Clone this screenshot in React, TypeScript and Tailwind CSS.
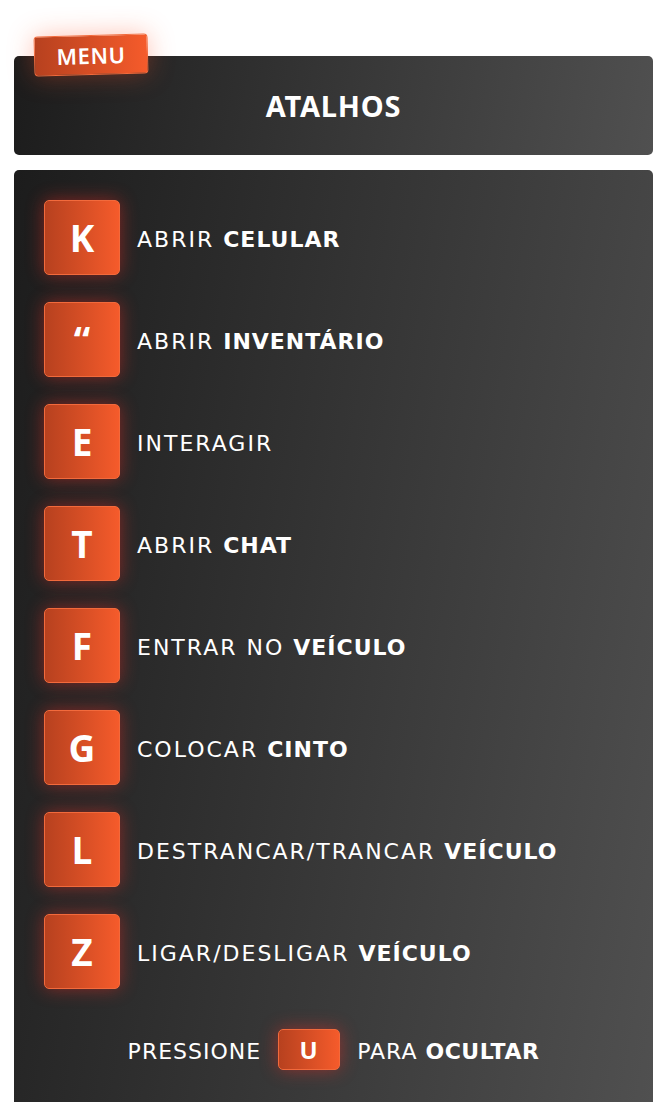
import { Fragment } from "react";

// atalhos do menu
const shortcuts = [
  { key: "K", text: "ABRIR", bold: "CELULAR" },
  { key: "\u201C", text: "ABRIR", bold: "INVENTÁRIO" },
  { key: "E", text: "INTERAGIR", bold: "" },
  { key: "T", text: "ABRIR", bold: "CHAT" },
  { key: "F", text: "ENTRAR NO", bold: "VEÍCULO" },
  { key: "G", text: "COLOCAR", bold: "CINTO" },
  { key: "L", text: "DESTRANCAR/TRANCAR", bold: "VEÍCULO" },
  { key: "Z", text: "LIGAR/DESLIGAR", bold: "VEÍCULO" },
];

const body = { fontFamily: '"DejaVu Sans", "Open Sans", sans-serif' };
const head = { fontFamily: '"Noto Sans", "Open Sans", sans-serif' };

function Key({ k, small }: { k: string; small?: boolean }) {
  return (
    <div
      className={
        "flex items-center justify-center rounded-[5px] border border-[#f26a3c] bg-[linear-gradient(90deg,#b7411f,#f55b2b)] text-white font-bold shadow-[0_0_18px_rgba(255,45,35,0.45)] " +
        (small ? "w-[62px] h-[41px] text-[24px]" : "w-[76px] h-[75px] text-[37px]")
      }
      style={{ fontFamily: '"Open Sans", sans-serif' }}
    >
      {k}
    </div>
  );
}

export default function App() {
  return (
    <div className="min-h-[1102px] bg-white pt-[56px] pl-[14px] pr-[1px]" style={body}>
      {/* HEADER */}
      <div className="relative">
        <div
          className="absolute left-[20px] top-[-21px] z-10 flex h-[40px] w-[114px] -rotate-[1.5deg] items-center justify-center rounded-[4px] border border-[#f26a3c] bg-[linear-gradient(90deg,#b7411f,#f55b2b)] text-[22px] font-semibold tracking-wide text-white shadow-[0_0_26px_rgba(255,80,40,0.35)]"
          style={head}
        >
          MENU
        </div>
        <div
          className="flex h-[99px] items-center justify-center rounded-[5px] bg-[linear-gradient(100deg,#1c1c1c,#505050)] text-[29px] font-bold tracking-[0.8px] text-white"
          style={head}
        >
          ATALHOS
        </div>
      </div>

      {/* LISTA */}
      <div className="mt-[15px] flex min-h-[932px] flex-col rounded-t-[5px] bg-[linear-gradient(100deg,#1c1c1c,#505050)] pl-[30px] pt-[30px]">
        <div className="flex flex-col gap-[27px]">
          {shortcuts.map((s) => (
            <div key={s.key} className="flex items-center gap-[17px]">
              <Key k={s.key} />
              <span className="mt-[3px] text-[22px] tracking-[2px] text-white">
                {s.text}
                {s.bold && (
                  <Fragment>
                    {" "}
                    <b className="font-bold tracking-[1px]">{s.bold}</b>
                  </Fragment>
                )}
              </span>
            </div>
          ))}
        </div>

        <div className="mt-[40px] flex items-center justify-center gap-[17px] pr-[30px] text-[22px] tracking-[1px] text-white">
          <span className="mt-[3px]">PRESSIONE</span>
          <Key k="U" small />
          <span className="mt-[3px]">
            PARA <b className="font-bold tracking-[0.5px]">OCULTAR</b>
          </span>
        </div>
      </div>
    </div>
  );
}
